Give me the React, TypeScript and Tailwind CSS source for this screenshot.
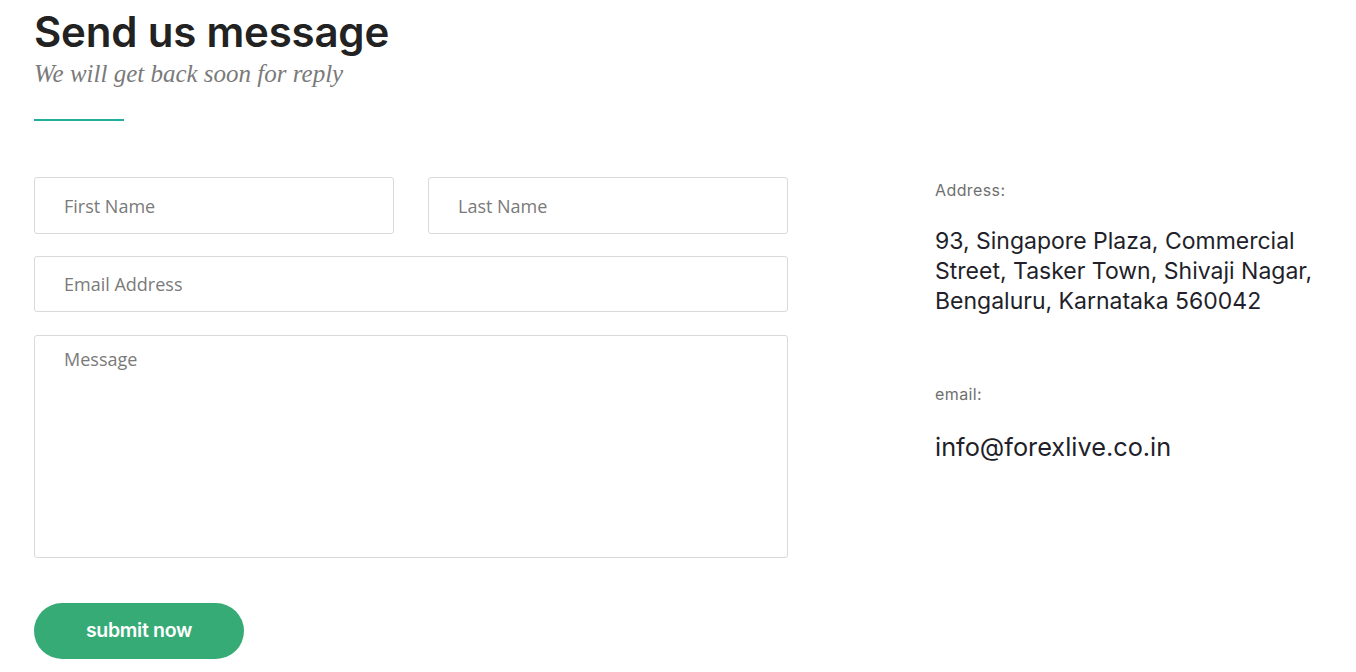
export default function App() {
  const sans = { fontFamily: 'Inter, "Noto Sans", sans-serif' };
  return (
    <div className="w-[1356px] h-[672px] bg-white overflow-hidden" style={sans}>
      <div className="pl-[34px] pt-[9px]">
        <h2 className="text-[42px] leading-[46px] font-semibold text-[#222222] tracking-[-0.2px]">
          Send us message
        </h2>
        <p
          className="text-[25px] leading-[30px] italic text-[#7a7a7a] mt-[4px]"
          style={{ fontFamily: '"Liberation Serif", serif' }}
        >
          We will get back soon for reply
        </p>
        <div className="w-[90px] h-[2px] bg-[#22ad9d] mt-[30px]" />
      </div>

      <div className="flex pl-[34px] mt-[56px]">
        <form className="w-[754px] flex flex-col" style={{ fontFamily: '"Open Sans", sans-serif' }}>
          <div className="flex gap-[34px]">
            <input
              placeholder="First Name"
              className="w-[360px] h-[57px] border border-[#d9d9d9] rounded-[3px] px-[29px] text-[18px] text-[#333] placeholder:text-[#7a7a7a] outline-none"
            />
            <input
              placeholder="Last Name"
              className="w-[360px] h-[57px] border border-[#d9d9d9] rounded-[3px] px-[29px] text-[18px] text-[#333] placeholder:text-[#7a7a7a] outline-none"
            />
          </div>
          <input
            placeholder="Email Address"
            className="mt-[22px] w-full h-[56px] border border-[#d9d9d9] rounded-[3px] px-[29px] text-[18px] text-[#333] placeholder:text-[#7a7a7a] outline-none"
          />
          <textarea
            placeholder="Message"
            className="mt-[23px] w-full h-[223px] border border-[#d9d9d9] rounded-[3px] px-[29px] pt-[10px] text-[18px] text-[#333] placeholder:text-[#7a7a7a] outline-none resize-none"
          />
          <button
            type="button"
            className="mt-[45px] w-[210px] h-[56px] rounded-full bg-[#37ab76] text-white text-[19.5px] font-semibold tracking-[-0.3px]"
            style={sans}
          >
            submit now
          </button>
        </form>

        <div className="ml-[147px] w-[410px] pt-[3px]">
          <div className="text-[16px] leading-[20px] text-[#6f6f6f] tracking-[0.4px]">Address:</div>
          <p className="mt-[26px] text-[23px] leading-[30px] text-[#231f2a]">
            93, Singapore Plaza, Commercial Street, Tasker Town, Shivaji Nagar, Bengaluru, Karnataka 560042
          </p>
          <div className="mt-[68px] text-[16px] leading-[20px] text-[#6f6f6f] tracking-[0.4px]">email:</div>
          <p className="mt-[26px] text-[25.3px] leading-[34px] text-[#231f2a]">info@forexlive.co.in</p>
        </div>
      </div>
    </div>
  );
}
